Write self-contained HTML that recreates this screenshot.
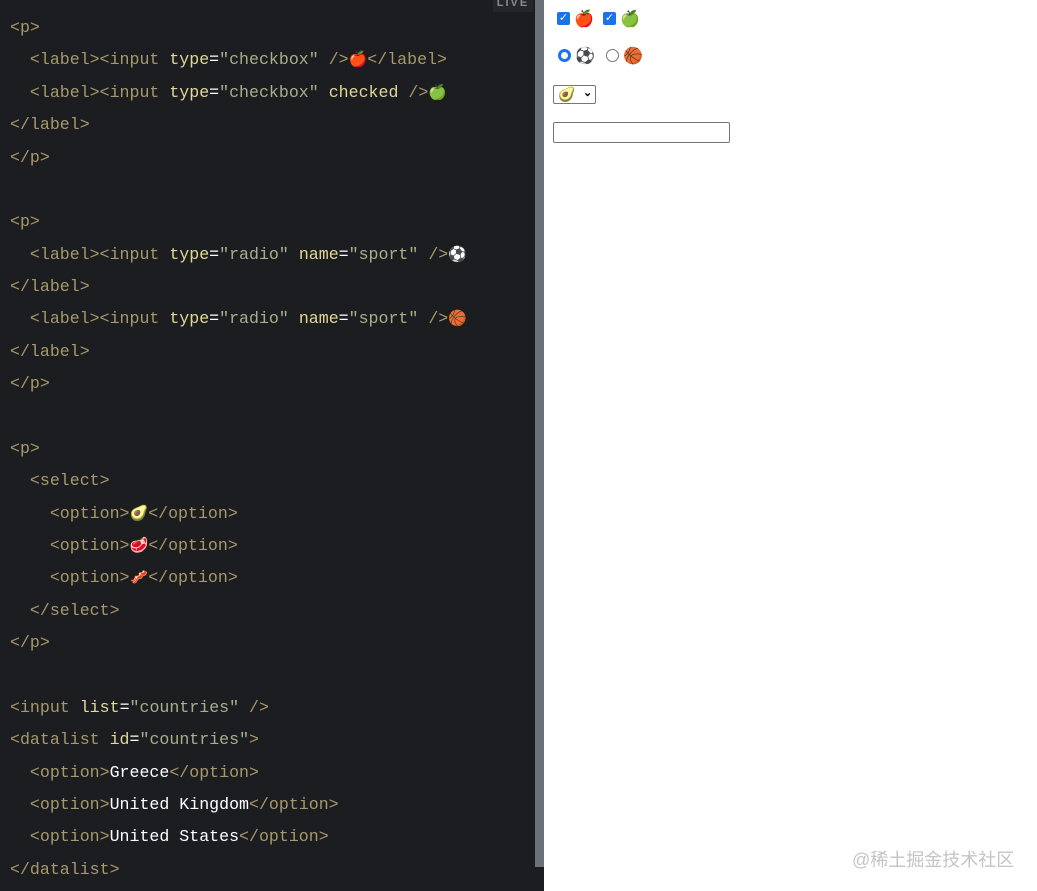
<!DOCTYPE html>
<html><head><meta charset="utf-8"><style>
html,body{margin:0;padding:0;width:1037px;height:891px;overflow:hidden;background:#fff;}
#ed{position:absolute;left:0;top:0;width:544px;height:891px;background:#1c1d21;}
#code{position:absolute;left:10px;top:12px;font-family:"Liberation Mono",monospace;font-size:16.6px;line-height:32.38px;white-space:pre;color:#a8996a;}
.a{color:#e3d896}.s{color:#a7b08c}.w{color:#fff}.e{font-family:"Noto Color Emoji","DejaVu Sans",sans-serif;font-size:15px;line-height:0}
#sb{position:absolute;left:535px;top:0;width:9px;height:867px;background:#6c7079;}
#live{position:absolute;left:493px;top:-6px;width:40px;height:18px;background:#25262a;color:#8a8b90;font:bold 11px "Liberation Sans",sans-serif;letter-spacing:2px;text-align:center;line-height:18px}
#pv{position:absolute;left:544px;top:0;right:0;bottom:0;font-family:"Liberation Sans",sans-serif;font-size:15px}
.cb{position:absolute;width:13px;height:13px;background:#1a73e8;border-radius:2px;color:#fff;font-size:11px;line-height:13px;text-align:center}
.rd{position:absolute;width:13px;height:13px;border-radius:50%;box-sizing:border-box}
.em{position:absolute;font-family:"Noto Color Emoji","DejaVu Sans",sans-serif;font-size:16px;line-height:18px}
#wm{position:absolute;left:852px;top:846px;color:#c4c4c4;font:18px "Liberation Sans","Noto Sans CJK SC",sans-serif}
</style></head><body>
<div id="ed">
<div id="code">&lt;p&gt;
  &lt;label&gt;&lt;input <span class="a">type</span><span class="w">=</span><span class="s">"checkbox"</span> /&gt;<span class="e">🍎</span>&lt;/label&gt;
  &lt;label&gt;&lt;input <span class="a">type</span><span class="w">=</span><span class="s">"checkbox"</span> <span class="a">checked</span> /&gt;<span class="e">🍏</span>
&lt;/label&gt;
&lt;/p&gt;

&lt;p&gt;
  &lt;label&gt;&lt;input <span class="a">type</span><span class="w">=</span><span class="s">"radio"</span> <span class="a">name</span><span class="w">=</span><span class="s">"sport"</span> /&gt;<span class="e">⚽</span>
&lt;/label&gt;
  &lt;label&gt;&lt;input <span class="a">type</span><span class="w">=</span><span class="s">"radio"</span> <span class="a">name</span><span class="w">=</span><span class="s">"sport"</span> /&gt;<span class="e">🏀</span>
&lt;/label&gt;
&lt;/p&gt;

&lt;p&gt;
  &lt;select&gt;
    &lt;option&gt;<span class="e">🥑</span>&lt;/option&gt;
    &lt;option&gt;<span class="e">🥩</span>&lt;/option&gt;
    &lt;option&gt;<span class="e">🥓</span>&lt;/option&gt;
  &lt;/select&gt;
&lt;/p&gt;

&lt;input <span class="a">list</span><span class="w">=</span><span class="s">"countries"</span> /&gt;
&lt;datalist <span class="a">id</span><span class="w">=</span><span class="s">"countries"</span>&gt;
  &lt;option&gt;<span class="w">Greece</span>&lt;/option&gt;
  &lt;option&gt;<span class="w">United Kingdom</span>&lt;/option&gt;
  &lt;option&gt;<span class="w">United States</span>&lt;/option&gt;
&lt;/datalist&gt;</div>
<div id="live">LIVE</div>
<div id="sb"></div>
</div>
<div id="pv">
<div class="cb" style="left:13px;top:12px">✓</div><span class="em" style="left:30px;top:10px">🍎</span>
<div class="cb" style="left:59px;top:12px">✓</div><span class="em" style="left:76px;top:10px">🍏</span>
<div class="rd" style="left:14px;top:49px;border:3px solid #1a73e8;background:#fff"></div><span class="em" style="left:31px;top:47px">⚽</span>
<div class="rd" style="left:62px;top:49px;border:1px solid #767676"></div><span class="em" style="left:79px;top:47px">🏀</span>
<div style="position:absolute;left:9px;top:85px;width:43px;height:19px;border:1px solid #767676;border-radius:2px;box-sizing:border-box"><span class="em" style="left:4px;top:0px;font-size:14px">🥑</span><span style="position:absolute;left:29px;top:0;font-size:11px;font-weight:bold">⌄</span></div>
<div style="position:absolute;left:9px;top:122px;width:177px;height:21px;border:1px solid #767676;border-radius:2px;box-sizing:border-box"></div>
</div>
<div id="wm">@稀土掘金技术社区</div>
</body></html>
